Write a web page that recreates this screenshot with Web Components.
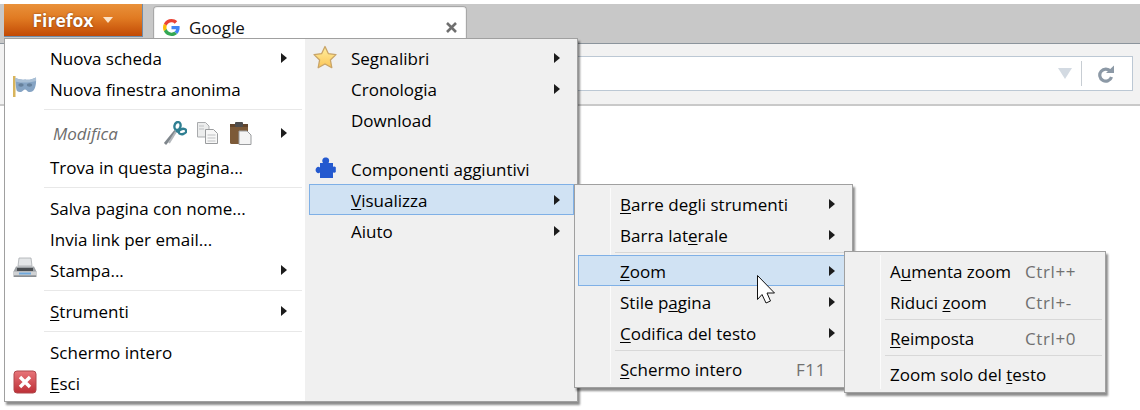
<!DOCTYPE html>
<html lang="it">
<head>
<meta charset="utf-8">
<title>Firefox</title>
<style>
  html, body { margin: 0; height: 410px; overflow: hidden; background: #fff; }
  body { font: 17px "Open Sans", "Noto Sans", sans-serif; color: #000; }
  #main { left: 4px; top: 38px; }
  #view { left: 574px; top: 184px; width: 277px; }
  #zoom { left: 844px; top: 251px; width: 260px; }
  u { text-decoration-thickness: 1px; text-underline-offset: 2px; }
</style>
</head>
<body>

<fx-chrome></fx-chrome>

<fx-menu id="main" split>
  <fx-item><span>Nuova scheda</span><i slot="arrow"></i></fx-item>
  <fx-item><fx-icon slot="icon" name="mask"></fx-icon>Nuova finestra anonima</fx-item>
  <fx-sep wide></fx-sep>
  <fx-item tall><em style="color:#6d6d6d;padding-left:3px">Modifica</em>
    <span slot="tools"><fx-icon name="scissors"></fx-icon><fx-icon name="copy"></fx-icon><fx-icon name="paste"></fx-icon></span>
    <i slot="arrow"></i></fx-item>
  <fx-item>Trova in questa pagina...</fx-item>
  <fx-sep wide></fx-sep>
  <fx-item>Salva pagina con nome...</fx-item>
  <fx-item>Invia link per email...</fx-item>
  <fx-item><fx-icon slot="icon" name="printer"></fx-icon>Stampa...<i slot="arrow"></i></fx-item>
  <fx-sep wide></fx-sep>
  <fx-item><span><u>S</u>trumenti</span><i slot="arrow"></i></fx-item>
  <fx-sep wide></fx-sep>
  <fx-item>Schermo intero</fx-item>
  <fx-item><fx-icon slot="icon" name="exit"></fx-icon><span><u>E</u>sci</span></fx-item>

  <fx-item slot="side"><fx-icon slot="icon" name="star"></fx-icon>Segnalibri<i slot="arrow"></i></fx-item>
  <fx-item slot="side">Cronologia<i slot="arrow"></i></fx-item>
  <fx-item slot="side">Download</fx-item>
  <fx-sep slot="side" blank></fx-sep>
  <fx-item slot="side"><fx-icon slot="icon" name="puzzle"></fx-icon>Componenti aggiuntivi</fx-item>
  <fx-item slot="side" active><span><u>V</u>isualizza</span><i slot="arrow"></i></fx-item>
  <fx-item slot="side">Aiuto<i slot="arrow"></i></fx-item>
</fx-menu>

<fx-menu id="view">
  <fx-item><span><u>B</u>arre degli strumenti</span><i slot="arrow"></i></fx-item>
  <fx-item><span>Barra lat<u>e</u>rale</span><i slot="arrow"></i></fx-item>
  <fx-sep></fx-sep>
  <fx-item active><span><u>Z</u>oom</span><i slot="arrow"></i></fx-item>
  <fx-item><span>Stile p<u>a</u>gina</span><i slot="arrow"></i></fx-item>
  <fx-item><span><u>C</u>odifica del testo</span><i slot="arrow"></i></fx-item>
  <fx-sep></fx-sep>
  <fx-item accel="F11"><span><u>S</u>chermo intero</span></fx-item>
</fx-menu>

<fx-menu id="zoom">
  <fx-item accel="Ctrl++"><span>A<u>u</u>menta zoom</span></fx-item>
  <fx-item accel="Ctrl+-"><span>Riduci <u>z</u>oom</span></fx-item>
  <fx-sep></fx-sep>
  <fx-item accel="Ctrl+0"><span><u>R</u>eimposta</span></fx-item>
  <fx-sep></fx-sep>
  <fx-item><span>Zoom solo del <u>t</u>esto</span></fx-item>
</fx-menu>

<fx-cursor></fx-cursor>

<script>
// icone disegnate a mano, viewBox 24x24
const ICONS = {
  google: `<svg viewBox="0 0 48 48"><path fill="#EA4335" d="M24 9.5c3.54 0 6.71 1.22 9.21 3.6l6.85-6.85C35.9 2.38 30.47 0 24 0 14.62 0 6.51 5.38 2.56 13.22l7.98 6.19C12.43 13.72 17.74 9.5 24 9.5z"/><path fill="#4285F4" d="M46.98 24.55c0-1.57-.15-3.09-.38-4.55H24v9.02h12.94c-.58 2.96-2.26 5.48-4.78 7.18l7.73 6c4.51-4.18 7.09-10.36 7.09-17.65z"/><path fill="#FBBC05" d="M10.53 28.59c-.48-1.45-.76-2.99-.76-4.59s.27-3.14.76-4.59l-7.98-6.19C.92 16.46 0 20.12 0 24c0 3.88.92 7.54 2.56 10.78l7.97-6.19z"/><path fill="#34A853" d="M24 48c6.48 0 11.93-2.13 15.89-5.81l-7.73-6c-2.15 1.45-4.92 2.3-8.16 2.3-6.26 0-11.57-4.22-13.47-9.91l-7.98 6.19C6.51 42.62 14.62 48 24 48z"/></svg>`,
  mask: `<svg viewBox="0 0 24 24"><rect x="0" y="0" width="2.500" height="21" fill="#d8b45c"/><path d="M2.500 2c4 1.500 6.500 2 9.500 1.500 3 .5 6 .5 11-2 .5 6-.5 11-3 13.500-2.500 1.800-5 1.200-6.500-.8-1-1-2-1-3 0-2 2.200-4.500 2.400-6.500 .8-1-1.200-1.500-9-1.500-13z" fill="#86a4c4"/><path d="M2.500 2c4 1.500 6.500 2 9.500 1.500 3 .5 6 .5 11-2l0 3.500c-5 1.500-8 1.500-11 1.500-3 0-6.500 0-9.500-1z" fill="#aac0d6"/><ellipse cx="8" cy="9" rx="2.700" ry="1.800" fill="#66809b"/><ellipse cx="16.500" cy="9" rx="2.700" ry="1.800" fill="#66809b"/></svg>`,
  printer: `<svg viewBox="0 0 24 24"><path d="M6 1h12l1 8H5z" fill="#e4e6e8" stroke="#a8acb0" stroke-width=".8"/><path d="M3 9.500h18l2.500 5v5.500H.5v-5.500z" fill="#9ea2a6"/><rect x="4" y="11" width="16" height="3" fill="#4a4e52"/><rect x="1" y="14.500" width="22" height="4" fill="#d0d2d4"/><rect x="6" y="15.500" width="12" height="2" fill="#6fa8dc"/><rect x="1" y="18.500" width="22" height="1.500" fill="#8a8e92"/></svg>`,
  exit: `<svg viewBox="0 0 24 24"><defs><linearGradient id="r" x1="0" y1="0" x2="0" y2="1"><stop offset="0" stop-color="#e8757a"/><stop offset="1" stop-color="#bd2f36"/></linearGradient></defs><rect x="1" y="1" width="22" height="22" rx="3" fill="url(#r)" stroke="#b0494d"/><path d="M7 7l10 10M17 7l-10 10" stroke="#fff" stroke-width="3.400"/></svg>`,
  star: `<svg viewBox="0 0 24 24"><defs><linearGradient id="s" x1="0" y1="0" x2="0" y2="1"><stop offset="0" stop-color="#fff0a0"/><stop offset="1" stop-color="#fbc557"/></linearGradient></defs><polygon points="12,1.500 15.300,8.600 23,9.600 17.400,15 18.800,22.700 12,19 5.200,22.700 6.600,15 1,9.600 8.700,8.600" fill="url(#s)" stroke="#c8a468" stroke-width="1.300" stroke-linejoin="round"/></svg>`,
  puzzle: `<svg viewBox="0 0 24 24"><path fill="#2459cf" d="M10 7c-1-1.500-1-3 0-4.500 1-1.500 4.500-1.500 5.500 0 1 1.500 .8 3 0 4.500H20V11c1-.8 2-.6 2.800 .2V16c-.8 .8-1.800 1-2.800 .2V22H7V16.500c-1.300 1-2.500 .8-3.500-.2-1.200-1.200-1.200-3.400 0-4.600 1-1 2.200-1.200 3.500-.2V7z"/></svg>`,
  scissors: `<svg viewBox="0 0 24 24"><path d="M2 23L12.500 10" stroke="#7f868c" stroke-width="2.800"/><path d="M6 22L14 9" stroke="#b4b8bc" stroke-width="2"/><ellipse cx="14.500" cy="5" rx="3" ry="4" fill="none" stroke="#2f7f92" stroke-width="2.400" transform="rotate(15 14.500 5)"/><ellipse cx="19.500" cy="10.500" rx="3.800" ry="2.600" fill="none" stroke="#2f7f92" stroke-width="2.400" transform="rotate(-15 19.500 10.500)"/><path d="M13 9.500L15.500 11" stroke="#2f7f92" stroke-width="2.400"/></svg>`,
  copy: `<svg viewBox="0 0 24 24"><path d="M1.500 1.500h8l3.500 3.500v11h-11.500z" fill="#eceded" stroke="#a9abad"/><path d="M9.500 8.500h8l4 4v10h-12z" fill="#f7f7f7" stroke="#9a9c9e"/><path d="M11.500 14h8M11.500 17h8M11.500 20h8M3 5h5M3 8h5" stroke="#bfc1c3"/></svg>`,
  paste: `<svg viewBox="0 0 24 24"><rect x="1" y="3" width="18" height="20" rx="1.500" fill="#7c5a38"/><rect x="1" y="3" width="18" height="3" fill="#63462c"/><rect x="6" y="1" width="8" height="5" rx="1" fill="#4d4d4d"/><path d="M10 10h8l4 4v9.500h-12z" fill="#f4f4f4" stroke="#9a9c9e"/></svg>`,
  reload: `<svg viewBox="0 0 18 18"><path d="M13.500 6.500A6 6 0 1 0 14.500 12" fill="none" stroke="#8c99a6" stroke-width="3.200"/><path d="M9 8L17 .5v7.500z" fill="#8c99a6"/></svg>`
};

class FxIcon extends HTMLElement {
  connectedCallback() {
    const name = this.getAttribute('name');
    const blur = name === 'google' || name === 'exit' ? 0 : .35;
    this.attachShadow({ mode: 'open' }).innerHTML = `
      <style>
        :host { display: block; width: var(--size, 24px); height: var(--size, 24px); }
        svg { display: block; width: 100%; height: 100%; filter: blur(${blur}px); }
      </style>${ICONS[name]}`;
  }
}

class FxChrome extends HTMLElement {
  constructor() {
    super();
    this.attachShadow({ mode: 'open' }).innerHTML = `
      <style>
        :host { display: block; padding-top: 4px; }
        .tabs {
          display: flex; height: 39px; background: #c8c8c8;
          border-bottom: 1px solid #8b949c;
        }
        .firefox {
          margin-left: 4px; flex: none;
          display: flex; align-items: center; justify-content: center; gap: 10px;
          padding-bottom: 1px; box-sizing: border-box; height: 33px; width: 139px;
          background: linear-gradient(#e9913a, #e07a22 45%, #c24a05);
          border-right: 1px solid #6f8caa; border-bottom: 1px solid #6f8caa;
          color: #fff; font-weight: 700; font-size: 17.5px;
          text-shadow: 0 0 2px rgba(90,30,0,.8);
        }
        .firefox b {
          width: 0; height: 0; border: 5.5px solid transparent; border-bottom: 0;
          border-top: 6px solid #fbe3c8; margin-top: 1px;
        }
        .tab {
          width: 314px; margin: 2px 0 0 10px; height: 37px; box-sizing: border-box;
          display: flex; align-items: center; padding: 4px 9px 0 9px;
          background: #fff; border: 1px solid #a8a8a8; border-bottom: 0;
          border-radius: 4px 4px 0 0; font-size: 17px; color: #111;
          box-shadow: inset 0 0 0 1px #f2f2f2;
        }
        .tab fx-icon { --size: 17px; margin-right: 9px; }
        .tab span { flex: 1; }
        .tab svg.close { margin-right: -1px; }
        .toolbar {
          height: 48px; background: #f2f2f2; border-bottom: 2px solid #c9c9c9;
          display: flex; align-items: flex-start; justify-content: flex-end;
          padding: 12px 7px 0 0; box-sizing: content-box;
        }
        .url {
          width: 900px; height: 33px; background: #fff; border: 1px solid #bcc8d4;
          display: flex; align-items: center; justify-content: flex-end;
        }
        .drop {
          width: 0; height: 0; border: 7px solid transparent; border-bottom: 0;
          border-top: 11px solid #d3dae2; margin-right: 9px;
        }
        .div { width: 1px; height: 25px; background: #c7cdd3; margin-right: 15px; }
        .url fx-icon { --size: 18px; margin-right: 17px; }
      </style>
      <div class="tabs">
        <div class="firefox">Firefox<b></b></div>
        <div class="tab"><fx-icon name="google"></fx-icon><span>Google</span>
          <svg class="close" width="13" height="11" viewBox="0 0 13 11"><path d="M2 1l9 9M11 1l-9 9" stroke="#6f6f6f" stroke-width="2.600"/></svg>
        </div>
      </div>
      <div class="toolbar">
        <div class="url"><div class="drop"></div><div class="div"></div><fx-icon name="reload"></fx-icon></div>
      </div>`;
  }
}

class FxMenu extends HTMLElement {
  constructor() {
    super();
    this.attachShadow({ mode: 'open' }).innerHTML = `
      <style>
        :host {
          position: absolute; display: grid; box-sizing: content-box;
          grid-template-columns: 1fr; --gut: 42px;
          background: #f0f0f0; border: 1px solid #a0a0a0;
          box-shadow: 2px 3px 2px rgba(0,0,0,.45);
        }
        :host([split]) { grid-template-columns: 300px 272px; }
        .col { padding: 3px; }
        .primary {
          background: linear-gradient(#fbfbfb, #fbfbfb) 35px 3px / 1px calc(100% - 6px) no-repeat;
        }
        :host([split]) .primary { background: #fff; padding-left: 4px; padding-right: 4px; --gut: 41px; }
        :host([split]) .side { padding-left: 4px; }
        :host(:not([split])) .side { display: none; }
      </style>
      <div class="col primary"><slot></slot></div>
      <div class="col side"><slot name="side"></slot></div>`;
  }
}

class FxItem extends HTMLElement {
  constructor() {
    super();
    const accel = this.getAttribute('accel');
    this.attachShadow({ mode: 'open' }).innerHTML = `
      <style>
        :host {
          display: flex; align-items: center; height: 31px; box-sizing: border-box;
          padding-top: 1px; white-space: nowrap;
        }
        :host([tall]) { height: 37px; }
        :host([active]) {
          background: #d0e2f3; box-shadow: inset 0 0 0 1px #7fb0e6;
        }
        .ico { flex: none; width: var(--gut, 41px); box-sizing: border-box; padding-left: 4px; margin-top: -3px; }
        .lbl { flex: 1; }
        .accel { color: #707070; letter-spacing: .6px; }
        ::slotted(i) {
          flex: none; width: 0; height: 0; margin: -1px 14px 0 0;
          border: 5px solid transparent; border-right: 0; border-left: 6px solid #1c1c1c;
        }
        ::slotted(span[slot=tools]) { display: flex; gap: 9px; margin: 0 28px 0 0; }
      </style>
      <div class="ico"><slot name="icon"></slot></div>
      <div class="lbl"><slot></slot></div>
      <slot name="tools"></slot>
      ${accel ? `<span class="accel" style="width:${accel.length > 3 ? 77 : 53}px">${accel}</span>` : ''}
      <slot name="arrow"></slot>`;
  }
}

class FxSep extends HTMLElement {
  constructor() {
    super();
    this.attachShadow({ mode: 'open' }).innerHTML = `
      <style>
        :host { display: block; height: 5px; padding: 2px 0 2px 37px; box-sizing: border-box; }
        :host([wide]) { height: 10px; padding: 5px 0 4px 35px; margin-right: -1px; }
        :host([blank]) { height: 18px; padding: 0; }
        div { height: 1px; background: #d8d8d8; }
        :host([wide]) div { background: #e8e8e8; }
        :host([blank]) div { display: none; }
      </style>
      <div></div>`;
  }
}

class FxCursor extends HTMLElement {
  constructor() {
    super();
    this.attachShadow({ mode: 'open' }).innerHTML = `
      <style>:host { position: absolute; left: 757px; top: 275px; width: 20px; height: 30px; }</style>
      <svg width="20" height="30" viewBox="0 0 20 30"><path d="M.5 .5V24.500L5 19.500 9 28 13.500 26 10 18H17.500z" fill="#fff" stroke="#111" stroke-width="1"/></svg>`;
  }
}

customElements.define('fx-icon', FxIcon);
customElements.define('fx-chrome', FxChrome);
customElements.define('fx-menu', FxMenu);
customElements.define('fx-item', FxItem);
customElements.define('fx-sep', FxSep);
customElements.define('fx-cursor', FxCursor);
</script>
</body>
</html>
